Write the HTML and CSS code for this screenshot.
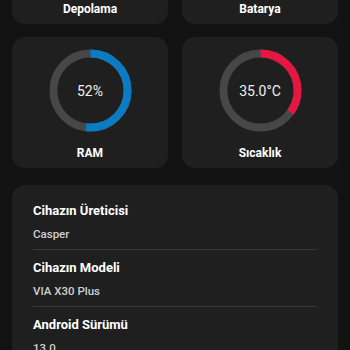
FILE: index.html
```html
<!DOCTYPE html>
<html lang="tr">
<head>
<meta charset="utf-8">
<link rel="stylesheet" href="styles.css">
</head>
<body>
<div class="page">
  <div class="grid">
    <div class="card">
      <svg class="ring" viewBox="0 0 84 84"><circle class="track" cx="42" cy="42" r="37.5"/><circle class="arc blue" cx="42" cy="42" r="37.5" pathLength="100" stroke-dasharray="60 100"/></svg>
      <div class="label">Depolama</div>
    </div>
    <div class="card">
      <svg class="ring" viewBox="0 0 84 84"><circle class="track" cx="42" cy="42" r="37.5"/><circle class="arc green" cx="42" cy="42" r="37.5" pathLength="100" stroke-dasharray="80 100"/></svg>
      <div class="label">Batarya</div>
    </div>
    <div class="card">
      <div class="ring-wrap">
        <svg class="ring" viewBox="0 0 84 84"><circle class="track" cx="42" cy="42" r="37.5"/><circle class="arc blue" cx="42" cy="42" r="37.5" pathLength="100" stroke-dasharray="52 100"/></svg>
        <span class="value">52%</span>
      </div>
      <div class="label">RAM</div>
    </div>
    <div class="card">
      <div class="ring-wrap">
        <svg class="ring" viewBox="0 0 84 84"><circle class="track" cx="42" cy="42" r="37.5"/><circle class="arc red" cx="42" cy="42" r="37.5" pathLength="100" stroke-dasharray="35 100"/></svg>
        <span class="value">35.0°C</span>
      </div>
      <div class="label">Sıcaklık</div>
    </div>
  </div>
  <div class="info">
    <div class="row">
      <div class="title">Cihazın Üreticisi</div>
      <div class="text">Casper</div>
    </div>
    <div class="row">
      <div class="title">Cihazın Modeli</div>
      <div class="text">VIA X30 Plus</div>
    </div>
    <div class="row">
      <div class="title">Android Sürümü</div>
      <div class="text">13.0</div>
    </div>
  </div>
</div>
</body>
</html>
```
FILE: styles.css
```css
html, body {
  margin: 0;
  padding: 0;
  background: #121212;
  overflow: hidden;
}
body {
  font-family: Roboto, "Liberation Sans", sans-serif;
  color: #fff;
}
.page {
  padding: 0 12px;
  margin-top: -107px;
}
.grid {
  display: grid;
  grid-template-columns: 1fr 1fr;
  column-gap: 14px;
  row-gap: 13px;
}
.card {
  background: #1f1f1f;
  border-radius: 13px;
  padding: 12px 0 6px;
  display: flex;
  flex-direction: column;
  align-items: center;
}
.ring-wrap {
  position: relative;
  width: 83px;
  height: 83px;
}
.ring {
  width: 83px;
  height: 83px;
  display: block;
  transform: rotate(-90deg);
}
.track {
  fill: none;
  stroke: #474747;
  stroke-width: 8;
}
.arc {
  fill: none;
  stroke-width: 8;
}
.blue { stroke: #0b7cc3; }
.red { stroke: #e3173f; }
.green { stroke: #2fae4f; }
.value {
  position: absolute;
  inset: 0;
  display: flex;
  align-items: center;
  justify-content: center;
  font-size: 14px;
  color: #f0f0f0;
}
.label {
  margin-top: 12px;
  font-size: 12px;
  line-height: 18px;
  font-weight: 700;
}
.info {
  margin-top: 17px;
  background: #1f1f1f;
  border-radius: 13px;
  padding: 8px 21px 0;
}
.row {
  padding: 9px 0 7px;
  border-bottom: 1px solid #383838;
}
.title {
  font-size: 13px;
  line-height: 18px;
  font-weight: 700;
}
.text {
  margin-top: 6px;
  font-size: 11.5px;
  line-height: 16px;
  font-weight: 500;
  color: #cfcfcf;
}
```
